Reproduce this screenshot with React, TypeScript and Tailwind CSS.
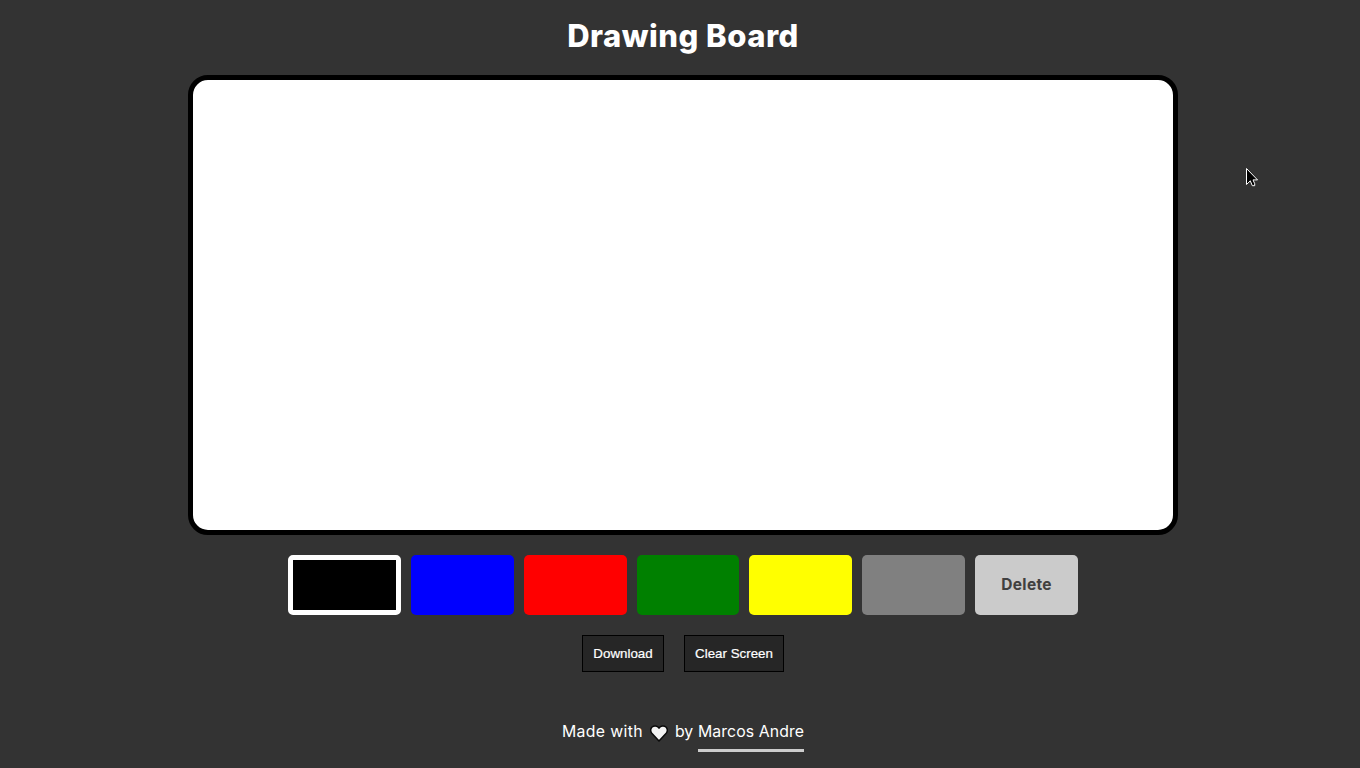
const colors = [
  { name: 'blue', className: 'bg-[#0000ff]' },
  { name: 'red', className: 'bg-[#ff0000]' },
  { name: 'green', className: 'bg-[#008000]' },
  { name: 'yellow', className: 'bg-[#ffff00]' },
  { name: 'gray', className: 'bg-[#808080]' },
];

function Heart() {
  return (
    <svg className="h-[18px] w-[18px] shrink-0" viewBox="0 0 18 18" aria-hidden="true">
      <path
        d="M9 17 1.8 9.3C.2 7.5.3 4.6 2.1 3 4.1 1.2 7.3 1.6 9 4.1 10.7 1.6 13.9 1.2 15.9 3 17.7 4.6 17.8 7.5 16.2 9.3Z"
        fill="#f3f3f3"
        stroke="#0a0a0a"
        strokeWidth="1.5"
        strokeLinejoin="round"
      />
    </svg>
  );
}

function Cursor() {
  return (
    <svg
      className="pointer-events-none absolute left-[1246px] top-[168px] h-[19px] w-[12px]"
      viewBox="0 0 12 19"
      aria-hidden="true"
    >
      <path
        d="M.5.5V16.5L4.3 12.8 6.3 17.7H8.7V15.7L7 11.9H11.5Z"
        fill="#000"
        stroke="#fff"
        strokeWidth="1"
      />
    </svg>
  );
}

export default function App() {
  return (
    <div className="relative h-screen overflow-hidden bg-[#333333] pl-[188px] text-white">
      <main className="flex w-[990px] flex-col items-center">
        <h1 className="flex h-[75px] items-center whitespace-nowrap pb-[2px] font-['Inter',sans-serif] text-[31px] font-extrabold tracking-[0.5px]">
          Drawing Board
        </h1>
        <div className="h-[460px] w-full rounded-[20px] border-[5px] border-black bg-white" />
        <div className="mt-5 flex h-[60px] w-[790px] gap-2.5">
          <button className="w-[112.857px] shrink-0 rounded-[5px] border-[5px] border-white bg-black" aria-label="black" />
          {colors.map((c) => (
            <button key={c.name} aria-label={c.name} className={`flex-1 rounded-[5px] ${c.className}`} />
          ))}
          <button className="flex-1 rounded-[5px] bg-[#cbcbcb] font-['Inter',sans-serif] text-[15.5px] font-bold tracking-[0.35px] text-[#404040]">
            Delete
          </button>
        </div>
        <div className="mt-5 flex gap-5 font-['Liberation_Sans',sans-serif] text-[13.333px] leading-[15px] [-webkit-text-stroke:0.2px_white]">
          <button className="h-[37px] w-[82px] whitespace-nowrap border border-black bg-[#262626]">Download</button>
          <button className="h-[37px] w-[100px] whitespace-nowrap border border-black bg-[#262626]">Clear Screen</button>
        </div>
        <footer className="mt-[44px] flex h-[36px] w-[242px] items-start whitespace-nowrap font-['Inter',sans-serif] text-[15.8px] leading-[32px]">
          <span className="w-[88px] tracking-[0.35px]">Made with</span>
          <span className="flex h-[34px] w-[25px] items-center">
            <Heart />
          </span>
          <span className="w-[23px]">by</span>
          <a className="h-[36px] w-[106px] border-b-[3px] border-[#cccccc] tracking-[0.1px]">Marcos Andre</a>
        </footer>
      </main>
      <Cursor />
    </div>
  );
}
